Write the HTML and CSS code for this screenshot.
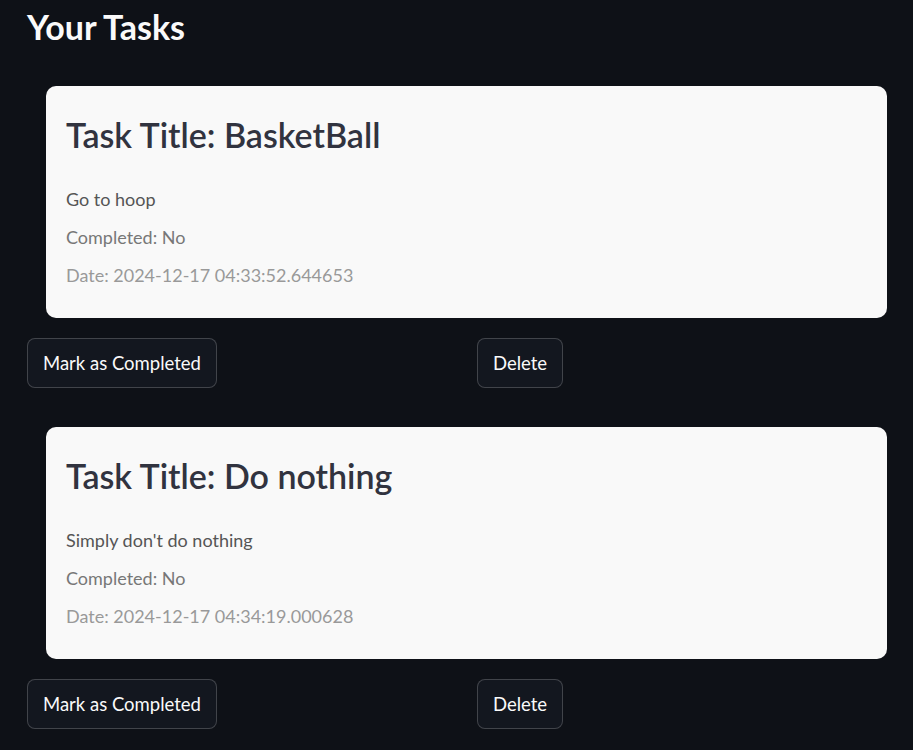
FILE: index.html
```html
<!DOCTYPE html>
<html>
<head>
<meta charset="utf-8">
<link rel="stylesheet" href="styles.css">
</head>
<body>
<main class="page">
  <h2 class="heading">Your Tasks</h2>
  <section class="task">
    <div class="card">
      <h3 class="card-title">Task Title: BasketBall</h3>
      <p class="desc">Go to hoop</p>
      <p class="status">Completed: No</p>
      <p class="date">Date: 2024-12-17 04:33:52.644653</p>
    </div>
    <div class="actions">
      <div class="col"><button class="btn">Mark as Completed</button></div>
      <div class="col"><button class="btn">Delete</button></div>
    </div>
  </section>
  <section class="task">
    <div class="card">
      <h3 class="card-title">Task Title: Do nothing</h3>
      <p class="desc">Simply don't do nothing</p>
      <p class="status">Completed: No</p>
      <p class="date">Date: 2024-12-17 04:34:19.000628</p>
    </div>
    <div class="actions">
      <div class="col"><button class="btn">Mark as Completed</button></div>
      <div class="col"><button class="btn">Delete</button></div>
    </div>
  </section>
</main>
</body>
</html>
```
FILE: styles.css
```css
html, body {
  margin: 0;
  padding: 0;
  background: #0e1117;
}
body {
  font-family: Lato, "Noto Sans", sans-serif;
  color: #fafafa;
}
.page {
  padding: 0 2px 0 27px;
  display: flex;
  flex-direction: column;
}
.heading {
  margin: 0;
  padding-top: 5px;
  font-size: 34px;
  font-weight: 700;
  line-height: 44px;
  color: #fafafa;
}
.task {
  display: flex;
  flex-direction: column;
  margin-top: 37px;
}
.task + .task {
  margin-top: 39px;
}
.card {
  background: #f9f9f9;
  border-radius: 10px;
  margin: 0 24px 0 19px;
  padding: 23px 20px 22px;
  height: 232px;
  box-sizing: border-box;
}
.card-title {
  margin: 0 0 19px;
  font-size: 34px;
  font-weight: 600;
  line-height: 52px;
  color: #31333f;
}
.card p {
  margin: 0;
  font-size: 18px;
  line-height: 38px;
}
.desc { color: #555555; }
.status { color: #777777; }
.date { color: #999999; }
.actions {
  display: grid;
  grid-template-columns: 1fr 1fr;
  column-gap: 16px;
  margin-top: 20px;
}
.btn {
  font-family: Lato, "Noto Sans", sans-serif;
  font-size: 18.5px;
  color: #fafafa;
  background: #13171f;
  border: 1px solid rgba(250, 250, 250, 0.2);
  border-radius: 8px;
  height: 50px;
  padding: 0 15px;
}
```
